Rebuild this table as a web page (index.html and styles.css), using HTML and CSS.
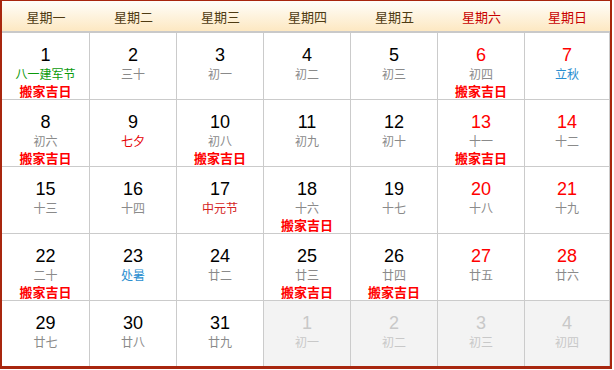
FILE: index.html
```html
<!DOCTYPE html>
<html lang="zh-CN">
<head>
<meta charset="utf-8">
<title>日历</title>
<link rel="stylesheet" href="styles.css">
</head>
<body>
<div class="cal">
  <div class="hd">星期一</div>
  <div class="hd">星期二</div>
  <div class="hd">星期三</div>
  <div class="hd">星期四</div>
  <div class="hd">星期五</div>
  <div class="hd we">星期六</div>
  <div class="hd we">星期日</div>

  <div class="day"><div class="num">1</div><div class="lunar fest-green">八一建军节</div><div class="good">搬家吉日</div></div>
  <div class="day"><div class="num">2</div><div class="lunar">三十</div></div>
  <div class="day"><div class="num">3</div><div class="lunar">初一</div></div>
  <div class="day"><div class="num">4</div><div class="lunar">初二</div></div>
  <div class="day"><div class="num">5</div><div class="lunar">初三</div></div>
  <div class="day we"><div class="num">6</div><div class="lunar">初四</div><div class="good">搬家吉日</div></div>
  <div class="day we"><div class="num">7</div><div class="lunar fest-blue">立秋</div></div>

  <div class="day"><div class="num">8</div><div class="lunar">初六</div><div class="good">搬家吉日</div></div>
  <div class="day"><div class="num">9</div><div class="lunar fest-red">七夕</div></div>
  <div class="day"><div class="num">10</div><div class="lunar">初八</div><div class="good">搬家吉日</div></div>
  <div class="day"><div class="num">11</div><div class="lunar">初九</div></div>
  <div class="day"><div class="num">12</div><div class="lunar">初十</div></div>
  <div class="day we"><div class="num">13</div><div class="lunar">十一</div><div class="good">搬家吉日</div></div>
  <div class="day we"><div class="num">14</div><div class="lunar">十二</div></div>

  <div class="day"><div class="num">15</div><div class="lunar">十三</div></div>
  <div class="day"><div class="num">16</div><div class="lunar">十四</div></div>
  <div class="day"><div class="num">17</div><div class="lunar fest-red2">中元节</div></div>
  <div class="day"><div class="num">18</div><div class="lunar">十六</div><div class="good">搬家吉日</div></div>
  <div class="day"><div class="num">19</div><div class="lunar">十七</div></div>
  <div class="day we"><div class="num">20</div><div class="lunar">十八</div></div>
  <div class="day we"><div class="num">21</div><div class="lunar">十九</div></div>

  <div class="day"><div class="num">22</div><div class="lunar">二十</div><div class="good">搬家吉日</div></div>
  <div class="day"><div class="num">23</div><div class="lunar fest-blue">处暑</div></div>
  <div class="day"><div class="num">24</div><div class="lunar">廿二</div></div>
  <div class="day"><div class="num">25</div><div class="lunar">廿三</div><div class="good">搬家吉日</div></div>
  <div class="day"><div class="num">26</div><div class="lunar">廿四</div><div class="good">搬家吉日</div></div>
  <div class="day we"><div class="num">27</div><div class="lunar">廿五</div></div>
  <div class="day we"><div class="num">28</div><div class="lunar">廿六</div></div>

  <div class="day last"><div class="num">29</div><div class="lunar">廿七</div></div>
  <div class="day last"><div class="num">30</div><div class="lunar">廿八</div></div>
  <div class="day last"><div class="num">31</div><div class="lunar">廿九</div></div>
  <div class="day last dim"><div class="num">1</div><div class="lunar">初一</div></div>
  <div class="day last dim"><div class="num">2</div><div class="lunar">初二</div></div>
  <div class="day last dim"><div class="num">3</div><div class="lunar">初三</div></div>
  <div class="day last dim"><div class="num">4</div><div class="lunar">初四</div></div>
</div>
</body>
</html>
```

FILE: styles.css
```css
html, body {
  margin: 0;
  padding: 0;
  background: #fff;
}

.cal {
  width: 608px;
  border-style: solid;
  border-color: #a8260e;
  border-width: 1px 2px 3px 2px;
  display: grid;
  grid-template-columns: 88px 87px 87px 87px 87px 87px 85px;
  grid-template-rows: 32px repeat(4, 67px) 65px;
  font-family: "Noto Sans CJK SC", sans-serif;
}

.hd {
  box-sizing: border-box;
  height: 32px;
  border-bottom: 2px solid #c9c9c9;
  background: linear-gradient(#fffefa, #fde8c2);
  color: #4f3b12;
  font-size: 13px;
  display: flex;
  align-items: center;
  justify-content: center;
  padding-top: 1px;
}

.hd.we {
  color: #c80000;
}

.day {
  box-sizing: border-box;
  border-right: 1px solid #cbcbcb;
  border-bottom: 1px solid #cbcbcb;
  padding-top: 12px;
  display: flex;
  flex-direction: column;
  align-items: center;
  background: #fff;
  overflow: hidden;
}

.day.last {
  border-bottom: none;
}

.num {
  font-family: "Liberation Sans", Arial, sans-serif;
  font-size: 18px;
  line-height: 20px;
  color: #000;
}

.day.we .num {
  color: #f00;
}

.lunar {
  font-size: 12px;
  line-height: 17px;
  color: #8a8a8a;
}

.good {
  font-size: 13px;
  line-height: 18px;
  font-weight: bold;
  color: #f00;
}

.fest-green {
  color: #0a9a0a;
}

.fest-blue {
  color: #2a8ed0;
}

.fest-red {
  color: #e60000;
}

.fest-red2 {
  color: #d42424;
}

.day.dim {
  background: #f3f3f3;
}

.day.dim .num,
.day.dim .lunar {
  color: #c8c8c8;
}
```
